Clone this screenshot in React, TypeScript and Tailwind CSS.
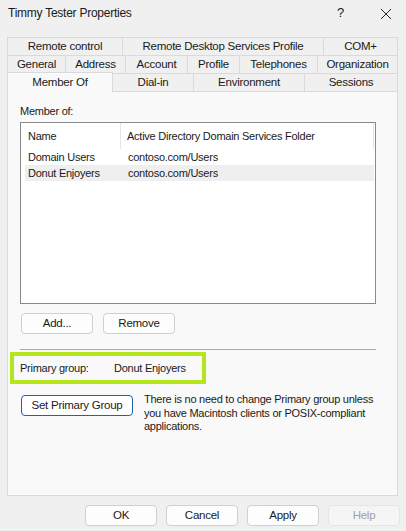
import React from "react";

const font = { fontFamily: '"Liberation Sans", Arial, sans-serif' };

type Tab = { label: string; w: string };

const row1: Tab[] = [
  { label: "Remote control", w: "w-[116px]" },
  { label: "Remote Desktop Services Profile", w: "w-[201px]" },
  { label: "COM+", w: "flex-1" },
];

const row2: Tab[] = [
  { label: "General", w: "w-[59px]" },
  { label: "Address", w: "w-[60px]" },
  { label: "Account", w: "w-[62px]" },
  { label: "Profile", w: "w-[52px]" },
  { label: "Telephones", w: "w-[78px]" },
  { label: "Organization", w: "flex-1" },
];

const row3: Tab[] = [
  { label: "Dial-in", w: "w-[81px]" },
  { label: "Environment", w: "w-[111px]" },
  { label: "Sessions", w: "flex-1" },
];

function TabRow({ tabs }: { tabs: Tab[] }) {
  return (
    <div className="flex h-[18px]">
      {tabs.map((t) => (
        <div
          key={t.label}
          className={`${t.w} flex items-center justify-center border-t border-r border-[#dadada] first:border-l leading-none`}
        >
          {t.label}
        </div>
      ))}
    </div>
  );
}

function Button({
  children,
  w = "w-[72px]",
  primary,
  disabled,
}: {
  children: React.ReactNode;
  w?: string;
  primary?: boolean;
  disabled?: boolean;
}) {
  return (
    <button
      type="button"
      className={`${w} h-[21px] rounded-[4px] border text-[11.5px] leading-none flex items-center justify-center ${
        primary
          ? "border-[#1f63b0] bg-white text-[#1a1a1a]"
          : disabled
          ? "border-[#e5e5e5] bg-[#f5f5f5] text-[#a0a0a0]"
          : "border-[#d0d0d0] bg-[#fdfdfd] text-[#1a1a1a]"
      }`}
    >
      {children}
    </button>
  );
}

export default function App() {
  return (
    <div
      style={font}
      className="w-[406px] h-[531px] bg-[#f0f0f0] text-[11px] tracking-[-0.25px] text-[#1a1a1a] overflow-hidden"
    >
      {/* title bar */}
      <div className="h-[26px] flex items-center pl-[8px] pr-[14px]">
        <span className="text-[12px] flex-1">Timmy Tester Properties</span>
        <span className="text-[13px] mr-[36px]">?</span>
        <svg width="12" height="12" viewBox="0 0 12 12" className="mt-[1px]">
          <path d="M1 1 L11 11 M11 1 L1 11" stroke="#222" strokeWidth="1" fill="none" />
        </svg>
      </div>

      {/* tabs */}
      <div className="mt-[11px] ml-[7px] w-[391px] text-[11.5px]">
        <TabRow tabs={row1} />
        <TabRow tabs={row2} />
        <div className="flex h-[18px] items-end">
          <div className="w-[106px] h-[20px] bg-[#f9f9f9] border-l border-t border-r border-[#dadada] flex items-center justify-center relative z-10 -mb-[1px]">
            Member Of
          </div>
          {row3.map((t) => (
            <div
              key={t.label}
              className={`${t.w} h-[18px] flex items-center justify-center border-t border-r border-[#dadada] leading-none`}
            >
              {t.label}
            </div>
          ))}
        </div>
      </div>

      {/* panel */}
      <div className="ml-[7px] w-[391px] h-[405px] bg-[#f9f9f9] border border-[#dadada] pl-[12px] pt-[11px]">
        <div className="h-[16px] leading-[16px]">Member of:</div>
        <div className="mt-[3px] w-[356px] h-[182px] border border-[#8a8a8a] bg-white pl-[4px] pr-[1px]">
          <div className="flex h-[26px] items-center">
            <div className="w-[96px] h-full flex items-center pl-[3px] border-r border-[#e5e5e5]">Name</div>
            <div className="w-[253px] h-full flex items-center pl-[6px] border-r border-[#e5e5e5]">
              Active Directory Domain Services Folder
            </div>
          </div>
          <div className="flex h-[16px] items-center w-[349px]">
            <div className="w-[97px] pl-[3px]">Domain Users</div>
            <div className="pl-[6px]">contoso.com/Users</div>
          </div>
          <div className="flex h-[16px] items-center w-[349px] bg-[#efefef]">
            <div className="w-[97px] pl-[3px]">Donut Enjoyers</div>
            <div className="pl-[6px]">contoso.com/Users</div>
          </div>
        </div>

        <div className="mt-[9px] flex gap-[10px] pl-[1px]">
          <Button>Add...</Button>
          <Button>Remove</Button>
        </div>

        <div className="mt-[15px] w-[356px] h-px bg-[#a8a8a8]" />

        <div className="-ml-[10px] mt-[2px] w-[196px] h-[32px] border-[4px] border-[#b5e61d] flex items-center pl-[6px]">
          <span className="w-[94px]">Primary group:</span>
          <span>Donut Enjoyers</span>
        </div>

        <div className="mt-[11px] flex pl-[1px]">
          <Button w="w-[112px]" primary>
            Set Primary Group
          </Button>
          <p className="ml-[11px] -mt-[2px] leading-[13.5px] whitespace-nowrap">
            There is no need to change Primary group unless
            <br />
            you have Macintosh clients or POSIX-compliant
            <br />
            applications.
          </p>
        </div>
      </div>

      {/* bottom buttons */}
      <div className="mt-[9px] flex gap-[9px] pl-[85px]">
        <Button>OK</Button>
        <Button>Cancel</Button>
        <Button>Apply</Button>
        <Button disabled>Help</Button>
      </div>
    </div>
  );
}
